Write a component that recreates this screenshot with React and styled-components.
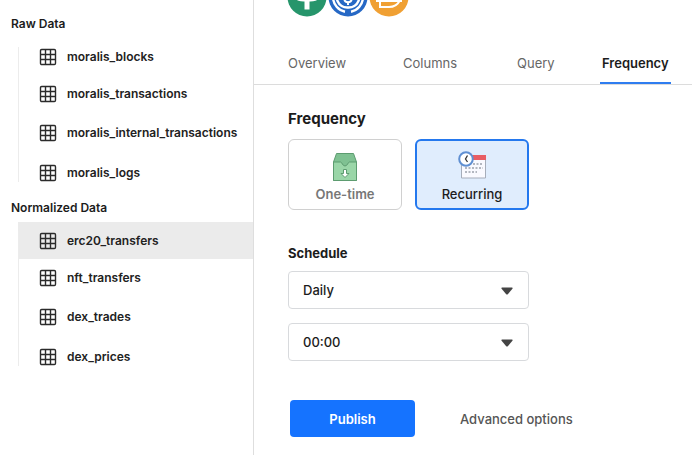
import { useState } from "react";
import styled, { createGlobalStyle } from "styled-components";

const rawTables = ["moralis_blocks", "moralis_transactions", "moralis_internal_transactions", "moralis_logs"];
const normalizedTables = ["erc20_transfers", "nft_transfers", "dex_trades", "dex_prices"];
const tabs = ["Overview", "Columns", "Query", "Frequency"];

function TableIcon(){
    return (
        <svg width="18" height="18" viewBox="0 0 18 18" fill="none" stroke="#2b2b2b" strokeWidth="1.4" aria-hidden="true">
            <rect x="1.5" y="1.5" width="15" height="15" rx="1.2"/>
            <path d="M6.5 1.5V16.5M11.5 1.5V16.5M1.5 6.5H16.5M1.5 11.5H16.5"/>
        </svg>
    );
}

function TetherLogo(){
    return (
        <svg width="40" height="40" viewBox="0 0 40 40" aria-hidden="true">
            <circle cx="20" cy="20" r="19.5" fill="#26956b"/>
            <path d="M10 8H30V13H22.5V32.5H17.5V13H10Z" fill="#fff"/>
            <ellipse cx="20" cy="20.500" rx="11" ry="3" fill="none" stroke="#fff" strokeWidth="2"/>
        </svg>
    );
}

function UsdcLogo(){
    return (
        <svg width="40" height="40" viewBox="0 0 40 40" fill="none" stroke="#fff" strokeWidth="2.4" aria-hidden="true">
            <circle cx="20" cy="20" r="19.5" fill="#2668c5" stroke="none"/>
            <path d="M15.500 5.700A15 15 0 0 0 17 34.700M24.500 5.700A15 15 0 0 1 23 34.700"/>
            <path d="M12.500 12A10.500 10.500 0 0 0 20 30.500A10.500 10.500 0 0 0 27.500 12"/>
            <path d="M23.500 16.500C23.500 12.500 16.500 12.500 16.500 16.500C16.500 20.500 23.500 19 23.500 22.500C23.500 26 16.500 26 16.500 22.500M20 10.500V13.500M20 25V28" strokeWidth="2"/>
        </svg>
    );
}

function DaiLogo(){
    return (
        <svg width="40" height="40" viewBox="0 0 40 40" fill="none" stroke="#fff" strokeWidth="2" aria-hidden="true">
            <circle cx="20" cy="20" r="19.5" fill="#f0a033" stroke="none"/>
            <path d="M11 24V30H20C25 30 28.500 28 30.500 24M11 18V10H19C25 10 28 13 29.500 18M7 19H33M7 24H33"/>
        </svg>
    );
}

function BoxIcon(){
    return (
        <svg width="24" height="28" viewBox="0 0 24 28" stroke="#5d9c70" strokeWidth="1" aria-hidden="true">
            <path d="M3.500 .5H20.500L23.500 9V27.500H.5V9Z" fill="#7fc192"/>
            <path d="M.5 9H7.500C9 9 9.500 13 12 13S15 9 16.500 9H23.500V27.500H.5Z" fill="#9ad6a8"/>
            <path d="M10.500 16.500H13.500V20.500H16L12 24.500L8 20.500H10.500Z" fill="#fff"/>
        </svg>
    );
}

function CalendarIcon(){
    return (
        <svg width="28" height="28" viewBox="0 0 28 28" aria-hidden="true">
            <path d="M3.500 4.500H27.500V27H3.500Z" fill="#fafaff" stroke="#a6adba"/>
            <path d="M3 4H28V9H3Z" fill="#e85d64"/>
            <path d="M15 13H25M7 17H25M7 21H19" stroke="#b3b7c0" strokeWidth="2" strokeDasharray="2 1.500"/>
            <circle cx="8" cy="8" r="6.800" fill="#fff" stroke="#5f8fd2" strokeWidth="2"/>
            <path d="M9.500 4.500L7.500 8L9.500 11" fill="none" stroke="#333" strokeWidth="1.300"/>
        </svg>
    );
}

function TableGroup(props){
    const {title, tables, selected, setSelected} = props;

    return (
        <Group>
            <GroupTitle>{title}</GroupTitle>
            <TableList>
                {tables.map(table => (
                    <li key={table}>
                        <TableButton $active={table === selected} onClick={() => setSelected(table)}>
                            <TableIcon/>
                            {table}
                        </TableButton>
                    </li>
                ))}
            </TableList>
        </Group>
    );
}

function FrequencyOption(props){
    const {label, icon, checked, onSelect} = props;

    return (
        <Option $checked={checked}>
            <OptionInput type="radio" name="frequency" checked={checked} onChange={onSelect}/>
            {icon}
            {label}
        </Option>
    );
}

function SelectField(props){
    const {label, options} = props;

    return (
        <SelectBox>
            <Select aria-label={label}>
                {options.map(option => <option key={option}>{option}</option>)}
            </Select>
            <svg width="12" height="8" viewBox="0 0 12 8" aria-hidden="true">
                <path d="M1 .5H11Q12 .8 11.400 1.800L7 7Q6 8 5 7L.6 1.800Q0 .8 1 .5Z" fill="#444"/>
            </svg>
        </SelectBox>
    );
}

export default function App(){
    const [selected, setSelected] = useState("erc20_transfers");
    const [tab, setTab] = useState("Frequency");
    const [frequency, setFrequency] = useState("Recurring");

    return (
        <Page>
            <GlobalStyle/>
            <Sidebar>
                <TableGroup title="Raw Data" tables={rawTables} selected={selected} setSelected={setSelected}/>
                <TableGroup title="Normalized Data" tables={normalizedTables} selected={selected} setSelected={setSelected}/>
            </Sidebar>
            <Main>
                <Tokens>
                    <TetherLogo/>
                    <UsdcLogo/>
                    <DaiLogo/>
                </Tokens>
                <Tabs>
                    {tabs.map(name => (
                        <Tab key={name} $active={name === tab} onClick={() => setTab(name)}>{name}</Tab>
                    ))}
                </Tabs>
                <Form onSubmit={e => e.preventDefault()}>
                    <Title>Frequency</Title>
                    <Options>
                        <FrequencyOption label="One-time" icon={<BoxIcon/>} checked={frequency === "One-time"} onSelect={() => setFrequency("One-time")}/>
                        <FrequencyOption label="Recurring" icon={<CalendarIcon/>} checked={frequency === "Recurring"} onSelect={() => setFrequency("Recurring")}/>
                    </Options>
                    <Subtitle>Schedule</Subtitle>
                    <Fields>
                        <SelectField label="Schedule interval" options={["Daily", "Weekly", "Monthly"]}/>
                        <SelectField label="Schedule time" options={["00:00", "06:00", "12:00", "18:00"]}/>
                    </Fields>
                    <Actions>
                        <PublishButton type="submit">Publish</PublishButton>
                        <AdvancedButton type="button">Advanced options</AdvancedButton>
                    </Actions>
                </Form>
            </Main>
        </Page>
    );
}

const GlobalStyle = createGlobalStyle`
    *{
        box-sizing: border-box;
    }

    body{
        margin: 0;
        background-color: #fff;
        color: #1c1c1c;
        font-family: 'Inter', sans-serif;
    }

    button, select{
        font-family: inherit;
        cursor: pointer;
    }
`;

const Page = styled.div`
    display: flex;
    min-height: 100vh;
`;

const Sidebar = styled.nav`
    flex: 0 0 254px;
    padding-top: 16px;
    border-right: 1px solid #dedede;
`;

const Group = styled.section`
    margin-bottom: 8px;
`;

const GroupTitle = styled.h2`
    margin: 0 0 6px 11px;
    font-size: 12px;
    font-weight: 600;
    line-height: 16px;
`;

const TableList = styled.ul`
    position: relative;
    display: grid;
    grid-template-rows: 37px 37px 41px 39px;
    margin: 0 0 0 18px;
    padding: 0;
    list-style: none;

    li{
        display: grid;
    }

    &::before{
        content: "";
        position: absolute;
        top: 9px;
        bottom: 10px;
        left: 0;
        width: 1px;
        background-color: #ececec;
    }
`;

const TableButton = styled.button`
    display: flex;
    align-items: center;
    gap: 10px;
    padding: 0 0 0 21px;
    border: none;
    background-color: ${props => props.$active? "#ebebeb" : "transparent"};
    color: #222;
    font-size: 12px;
    font-weight: 600;
`;

const Main = styled.main`
    flex: 1;
    min-width: 0;
`;

const Tokens = styled.div`
    display: flex;
    align-items: flex-end;
    gap: 1px;
    height: 17px;
    padding-left: 33px;
    overflow: hidden;

    svg{
        flex-shrink: 0;
    }
`;

const Tabs = styled.div`
    display: grid;
    grid-template-columns: 115px 114px 83px 71px;
    height: 68px;
    padding: 26px 0 0 34px;
    border-bottom: 1px solid #dcdcdc;
`;

const Tab = styled.button`
    padding: 0 0 0 ${props => props.$active? "2px" : "0"};
    border: none;
    border-bottom: 2px solid ${props => props.$active? "#2f7df0" : "transparent"};
    background-color: transparent;
    color: ${props => props.$active? "#1c1c1c" : "#666"};
    font-size: 13px;
    font-weight: ${props => props.$active? "600" : "400"};
    text-align: left;
`;

const Form = styled.form`
    padding: 24px 34px 18px;
`;

const Title = styled.h1`
    margin: 0 0 10px;
    font-size: 15px;
    font-weight: 700;
    line-height: 20px;
`;

const Options = styled.div`
    display: flex;
    gap: 13px;
`;

const Option = styled.label`
    display: flex;
    flex-direction: column;
    align-items: center;
    gap: ${props => props.$checked? "6px" : "4px"};
    width: 114px;
    height: 71px;
    padding-top: ${props => props.$checked? "10px" : "13px"};
    border: ${props => props.$checked? "2px solid #2478ee" : "1px solid #d0d0d0"};
    border-radius: 6px;
    background-color: ${props => props.$checked? "#e0edfd" : "#fff"};
    color: ${props => props.$checked? "#1c1c1c" : "#777"};
    font-size: 13px;
    font-weight: ${props => props.$checked? "500" : "600"};
    line-height: 18px;
    cursor: pointer;
`;

const OptionInput = styled.input`
    position: absolute;
    opacity: 0;
    pointer-events: none;
`;

const Subtitle = styled.h2`
    margin: 34px 0 9px;
    font-size: 13px;
    font-weight: 700;
    line-height: 18px;
`;

const Fields = styled.div`
    display: grid;
    gap: 14px;
    max-width: 241px;
`;

const SelectBox = styled.div`
    position: relative;

    svg{
        position: absolute;
        top: 16px;
        right: 16px;
        pointer-events: none;
    }
`;

const Select = styled.select`
    width: 100%;
    height: 38px;
    padding: 0 40px 0 14px;
    appearance: none;
    border: 1px solid #d8dadd;
    border-radius: 4px;
    background-color: #fff;
    color: #1c1c1c;
    font-size: 13px;
    font-weight: 500;
`;

const Actions = styled.div`
    display: flex;
    align-items: center;
    gap: 45px;
    margin: 39px 0 0 2px;
`;

const PublishButton = styled.button`
    width: 125px;
    height: 37px;
    border: none;
    border-radius: 4px;
    background-color: #1573ff;
    color: #fff;
    font-size: 13px;
    font-weight: 600;
`;

const AdvancedButton = styled.button`
    padding: 0;
    border: none;
    background-color: transparent;
    color: #555;
    font-size: 13px;
    font-weight: 500;
`;
